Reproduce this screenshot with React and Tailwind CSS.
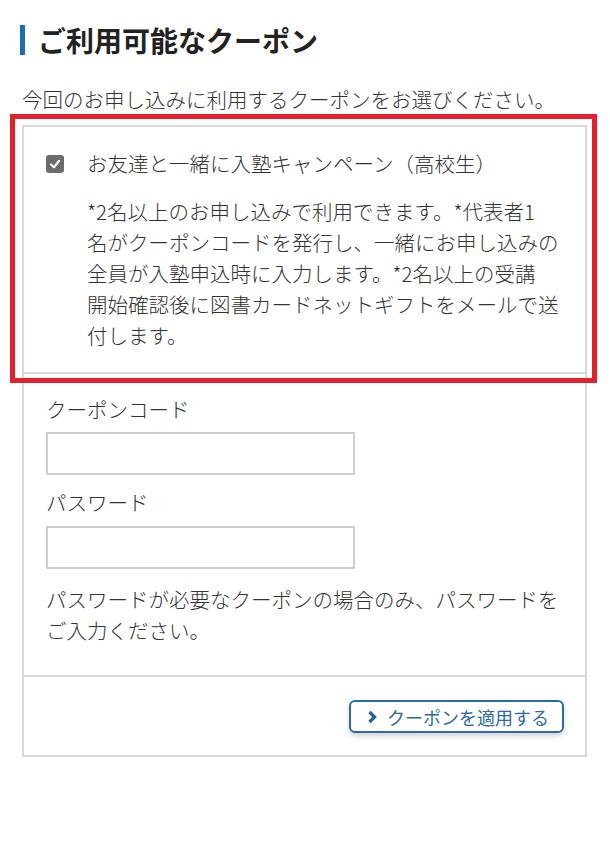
import React from "react";

const jp = { fontFamily: '"Noto Sans CJK JP", "Noto Sans", sans-serif' };

const App = () => {
  return (
    <div className="relative w-[610px] min-h-[846px] bg-white text-[#333] font-light" style={jp}>
      <div className="pt-[22px] pl-[20px] flex items-center">
        <span className="w-[5px] h-[30px] bg-[#1b6db5]"></span>
        <h2 className="ml-[13px] text-[28px] leading-[36px] font-bold text-[#222]">
          ご利用可能なクーポン
        </h2>
      </div>

      <p className="mt-[26px] pl-[22px] text-[20.5px] leading-[31px]">
        今回のお申し込みに利用するクーポンをお選びください。
      </p>

      <div className="mt-[10px] ml-[22px] w-[565px] border-2 border-[#d9d9d9]">
        <div className="pl-[22px] pr-[14px] pt-[21px] pb-[21px]">
          <label className="flex items-center">
            <span className="w-[18px] h-[18px] rounded-[3px] bg-[#6b6b6b] flex items-center justify-center">
              <svg width="12" height="12" viewBox="0 0 12 12">
                <polyline
                  points="2,6.5 5,9.2 10.2,2.8"
                  fill="none"
                  stroke="#fff"
                  strokeWidth="2.2"
                  strokeLinecap="round"
                  strokeLinejoin="round"
                />
              </svg>
            </span>
            <span className="ml-[23px] text-[20.5px] leading-[31px]">
              お友達と一緒に入塾キャンペーン（高校生）
            </span>
          </label>
          <p className="mt-[17px] pl-[41px] text-[20.5px] leading-[31px] whitespace-nowrap">
            *2名以上のお申し込みで利用できます。*代表者1
            <br />
            名がクーポンコードを発行し、一緒にお申し込みの
            <br />
            全員が入塾申込時に入力します。*2名以上の受講
            <br />
            開始確認後に図書カードネットギフトをメールで送
            <br />
            付します。
          </p>
        </div>

        <div className="border-t-2 border-[#d9d9d9] pl-[22px] pr-[14px] pt-[20px] pb-[29px]">
          <p className="text-[20.5px] leading-[31px]">クーポンコード</p>
          <input
            type="text"
            className="mt-[7px] block w-[309px] h-[43px] border-2 border-[#cfcfcf] bg-white outline-none"
          />
          <p className="mt-[12px] text-[20.5px] leading-[31px]">パスワード</p>
          <input
            type="password"
            className="mt-[8px] block w-[309px] h-[43px] border-2 border-[#cfcfcf] bg-white outline-none"
          />
          <p className="mt-[15px] text-[20.5px] leading-[31px] whitespace-nowrap">
            パスワードが必要なクーポンの場合のみ、パスワードを
            <br />
            ご入力ください。
          </p>
        </div>

        <div className="border-t-2 border-[#d9d9d9] flex justify-end pr-[21px] pt-[23px] pb-[22px]">
          <button className="h-[33px] flex items-center whitespace-nowrap pl-[16px] pr-[13px] border-2 border-[#2e6aa6] rounded-[6px] bg-white text-[#2d6aa8] text-[18px] font-normal shadow-[0_3px_5px_rgba(0,0,0,0.18)]">
            <svg width="11" height="14" viewBox="0 0 11 14" className="shrink-0">
              <polyline
                points="2.5,2 7.5,7 2.5,12"
                fill="none"
                stroke="#1f5d9c"
                strokeWidth="3.2"
                strokeLinejoin="miter"
              />
            </svg>
            <span className="ml-[9px] leading-none">クーポンを適用する</span>
          </button>
        </div>
      </div>

      <div className="absolute left-[10px] top-[114px] w-[587px] h-[269px] border-[5px] border-[#e3202b] pointer-events-none"></div>
    </div>
  );
};

export default App;
